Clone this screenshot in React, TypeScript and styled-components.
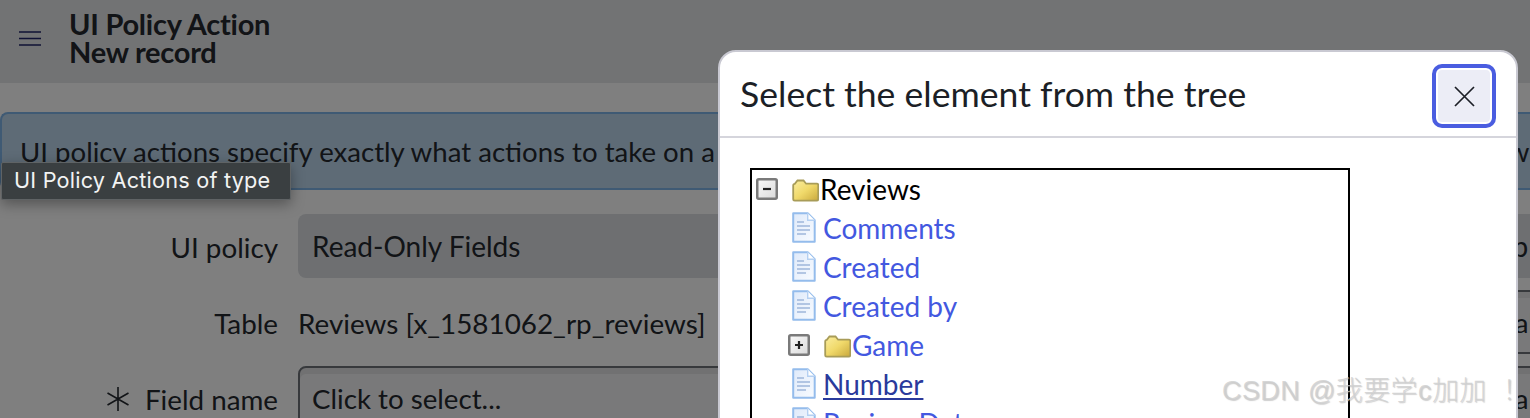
import React from "react";
import styled, { createGlobalStyle } from "styled-components";

const GlobalStyle = createGlobalStyle`
  html, body {
    margin: 0;
    height: 100%;
    overflow: hidden;
    background: #fff;
  }
  * { box-sizing: border-box; }
`;

const Page = styled.div`
  position: relative;
  width: 1530px;
  height: 418px;
  overflow: hidden;
  font-family: Lato, "Liberation Sans", sans-serif;
  color: #24282e;
`;

const Header = styled.header`
  display: flex;
  align-items: center;
  gap: 28px;
  height: 83px;
  padding: 0 0 7px 19px;
  background: #e4e6e9;
`;

const HeaderTitle = styled.h1`
  margin: 0;
  font-size: 29px;
  line-height: 28px;
  font-weight: 700;
  letter-spacing: -0.25px;
`;

const Main = styled.main`
  padding-top: 29px;
`;

const InfoBox = styled.div`
  height: 78px;
  padding: 21px 0 0 18px;
  background: #bcd6ec;
  border: 2px solid #7fb4e8;
  border-right: none;
  border-radius: 8px 0 0 8px;
  font-size: 27.6px;
  line-height: 34px;
  white-space: nowrap;
  overflow: hidden;
`;

const Form = styled.form`
  display: grid;
  grid-template-columns: 278px 700px 405px 1fr;
  column-gap: 20px;
  row-gap: 12px;
  margin-top: 24px;
`;

const Label = styled.label`
  display: flex;
  align-items: center;
  justify-content: flex-end;
  gap: 14px;
  height: 64px;
  padding-top: 2px;
  font-size: 27.8px;
`;

const ReadOnlyField = styled.div`
  display: flex;
  align-items: center;
  height: 64px;
  padding: 0 14px;
  background: #dcdfe3;
  border-radius: 8px;
  font-size: 28px;
  white-space: nowrap;
`;

const PlainValue = styled.div`
  display: flex;
  align-items: center;
  height: 64px;
  padding-top: 2px;
  font-size: 27.85px;
  white-space: nowrap;
`;

const TextField = styled.div`
  display: flex;
  align-items: center;
  height: 64px;
  padding: 0 12px;
  background: #f3f3f4;
  border: 2px solid #6f7379;
  border-radius: 8px;
  box-shadow: inset 0 6px 0 #e2e3e5;
  font-size: 27.7px;
  white-space: nowrap;
`;

const Backdrop = styled.div`
  position: absolute;
  inset: 0;
  background: rgba(0, 0, 0, 0.5);
`;

const Tooltip = styled.div`
  position: absolute;
  left: 1px;
  top: 162px;
  width: 290px;
  height: 38px;
  padding: 0 0 2px 12px;
  display: flex;
  align-items: center;
  background: #3a3f41;
  border: 1px solid #5f6365;
  border-radius: 2px;
  box-shadow: 0 4px 14px rgba(0, 0, 0, 0.35);
  color: #f2f3f3;
  font-family: Inter, "Liberation Sans", sans-serif;
  font-size: 21.7px;
  letter-spacing: 0.2px;
  white-space: nowrap;
`;

const Modal = styled.section`
  position: absolute;
  left: 718px;
  top: 50px;
  width: 800px;
  height: 520px;
  background: #fff;
  border: 2px solid #c9c9d2;
  border-radius: 18px;
`;

const ModalHeader = styled.div`
  display: flex;
  align-items: center;
  justify-content: space-between;
  height: 86px;
  padding: 4px 20px 0 20px;
  border-bottom: 2px solid #d5d5dc;
`;

const ModalTitle = styled.h2`
  margin: 0 0 5px;
  font-size: 35.6px;
  font-weight: 400;
  color: #1c1f26;
`;

const CloseButton = styled.button`
  display: flex;
  align-items: center;
  justify-content: center;
  width: 64px;
  height: 64px;
  padding: 0;
  background: #ecedf6;
  border: 4px solid #4a5de0;
  border-radius: 10px;
  box-shadow: inset 0 0 0 2px #fff;
  color: #1c1f26;
`;

const ModalBody = styled.div`
  padding: 30px 30px 0;
`;

const Tree = styled.ul`
  width: 600px;
  height: 400px;
  margin: 0;
  padding: 0 4px;
  list-style: none;
  border: 2px solid #000;
  font-size: 28px;
`;

const TreeRow = styled.li<{ $indent: number }>`
  display: flex;
  align-items: center;
  height: 39px;
  padding: 0 0 2px ${(p) => p.$indent}px;
`;

const TreeLink = styled.a<{ $hover?: boolean; $root?: boolean }>`
  color: ${(p) => (p.$root ? "#000" : p.$hover ? "#2a3a9c" : "#4358e0")};
  text-decoration: ${(p) => (p.$hover ? "underline" : "none")};
  text-decoration-thickness: 2px;
  text-underline-offset: 3px;
  white-space: nowrap;
`;

const ToggleIcon = styled.svg`
  flex: none;
  width: 22px;
  height: 22px;
`;

const FolderIcon = styled.svg<{ $gap: number }>`
  flex: none;
  width: 27px;
  height: 23px;
  margin: 3px 1px 0 ${(p) => p.$gap}px;
`;

const DocIcon = styled.svg`
  flex: none;
  width: 24px;
  height: 31px;
  margin-right: 7px;
`;

const Watermark = styled.div`
  position: absolute;
  left: 1222px;
  top: 374px;
  color: rgba(205, 205, 205, 0.8);
  font-family: "Liberation Sans", "Noto Sans CJK SC", sans-serif;
  font-size: 27px;
  font-weight: 300;
  line-height: 34px;
  letter-spacing: 0.4px;
  text-shadow: 1px 1px 1px rgba(120, 120, 120, 0.35);
  white-space: pre;
`;

const Hamburger = () => (
  <svg width="22" height="15" viewBox="0 0 22 15" fill="none" stroke="#20246a" strokeWidth="1.6">
    <path d="M0 1h22M0 7.5h22M0 14h22" />
  </svg>
);

const Required = () => (
  <svg width="26" height="26" viewBox="0 0 26 26" fill="none" stroke="#24282e" strokeWidth="1.6">
    <path d="M13 1v24M2.5 7l21 12M23.5 7l-21 12" />
  </svg>
);

const CloseIcon = () => (
  <svg width="21" height="21" viewBox="0 0 21 21" fill="none" stroke="currentColor" strokeWidth="1.7">
    <path d="M1 1l19 19M20 1L1 20" />
  </svg>
);

const Toggle: React.FC<{ open: boolean }> = ({ open }) => (
  <ToggleIcon viewBox="0 0 22 22">
    <defs>
      <linearGradient id="toggleFill" x1="0" y1="0" x2="1" y2="1">
        <stop offset="0" stopColor="#fafafa" />
        <stop offset="1" stopColor="#dadada" />
      </linearGradient>
    </defs>
    <rect x="1.25" y="1.25" width="19.5" height="19.5" rx="1.5" fill="url(#toggleFill)" stroke="#7a7a7a" strokeWidth="2.5" />
    <path d={open ? "M7 11h8" : "M7 11h8M11 7v8"} stroke="#222" strokeWidth="2.2" />
  </ToggleIcon>
);

const Folder: React.FC<{ gap: number }> = ({ gap }) => (
  <FolderIcon $gap={gap} viewBox="0 0 27 23">
    <defs>
      <linearGradient id="folderFill" x1="0" y1="0" x2="1" y2="1">
        <stop offset="0" stopColor="#fbeea0" />
        <stop offset="0.5" stopColor="#f0d96a" />
        <stop offset="1" stopColor="#c9a83c" />
      </linearGradient>
    </defs>
    <path
      d="M1.2 6.5c0-1 .6-1.6 1.6-1.6L5.5 1.5h6l2.6 3.2h10.6c1 0 1.6.6 1.6 1.6V20c0 1-.6 1.6-1.6 1.6H2.8c-1 0-1.6-.6-1.6-1.6z"
      fill="url(#folderFill)"
      stroke="#a89c58"
      strokeWidth="1.8"
    />
  </FolderIcon>
);

const Doc = () => (
  <DocIcon viewBox="0 0 24 31">
    <defs>
      <linearGradient id="docFill" x1="0" y1="0" x2="1" y2="1">
        <stop offset="0" stopColor="#dfeafa" />
        <stop offset="1" stopColor="#f8fbff" />
      </linearGradient>
    </defs>
    <path d="M1.2 1.2h14.5l7 7v21.6H1.2z" fill="url(#docFill)" stroke="#94bcec" strokeWidth="2" strokeLinejoin="round" />
    <path d="M15.7 1.2v7h7" fill="#fff" stroke="#b4d0f2" strokeWidth="1.4" />
    <path d="M5 10h7M5 14h13M5 18h13M5 22h9" stroke="#9fb6da" strokeWidth="1.6" />
  </DocIcon>
);

const leaves = ["Comments", "Created", "Created by"];

export default function App() {
  return (
    <Page>
      <GlobalStyle />
      <Header>
        <Hamburger />
        <HeaderTitle>
          UI Policy Action
          <br />
          New record
        </HeaderTitle>
      </Header>
      <Main>
        <InfoBox>
          UI policy actions specify exactly what actions to take on a form when the UI policy conditions are met, and what to do next when they are not, for how
        </InfoBox>
        <Form>
          <Label>UI policy</Label>
          <ReadOnlyField>Read-Only Fields</ReadOnlyField>
          <span />
          <ReadOnlyField>Setup</ReadOnlyField>
          <Label>Table</Label>
          <PlainValue>Reviews [x_1581062_rp_reviews]</PlainValue>
          <span />
          <TextField>Global</TextField>
          <Label>
            <Required />
            Field name
          </Label>
          <TextField>Click to select...</TextField>
          <span />
          <TextField>Global</TextField>
        </Form>
      </Main>
      <Backdrop />
      <Tooltip>UI Policy Actions of type</Tooltip>
      <Modal>
        <ModalHeader>
          <ModalTitle>Select the element from the tree</ModalTitle>
          <CloseButton type="button" aria-label="Close">
            <CloseIcon />
          </CloseButton>
        </ModalHeader>
        <ModalBody>
          <Tree>
            <TreeRow $indent={0}>
              <Toggle open />
              <Folder gap={14} />
              <TreeLink $root>Reviews</TreeLink>
            </TreeRow>
            {leaves.map((name) => (
              <TreeRow $indent={36} key={name}>
                <Doc />
                <TreeLink>{name}</TreeLink>
              </TreeRow>
            ))}
            <TreeRow $indent={32}>
              <Toggle open={false} />
              <Folder gap={14} />
              <TreeLink>Game</TreeLink>
            </TreeRow>
            <TreeRow $indent={36}>
              <Doc />
              <TreeLink $hover>Number</TreeLink>
            </TreeRow>
            <TreeRow $indent={36}>
              <Doc />
              <TreeLink>Review Date</TreeLink>
            </TreeRow>
          </Tree>
        </ModalBody>
      </Modal>
      <Watermark>CSDN @我要学c加加  ！</Watermark>
    </Page>
  );
}
